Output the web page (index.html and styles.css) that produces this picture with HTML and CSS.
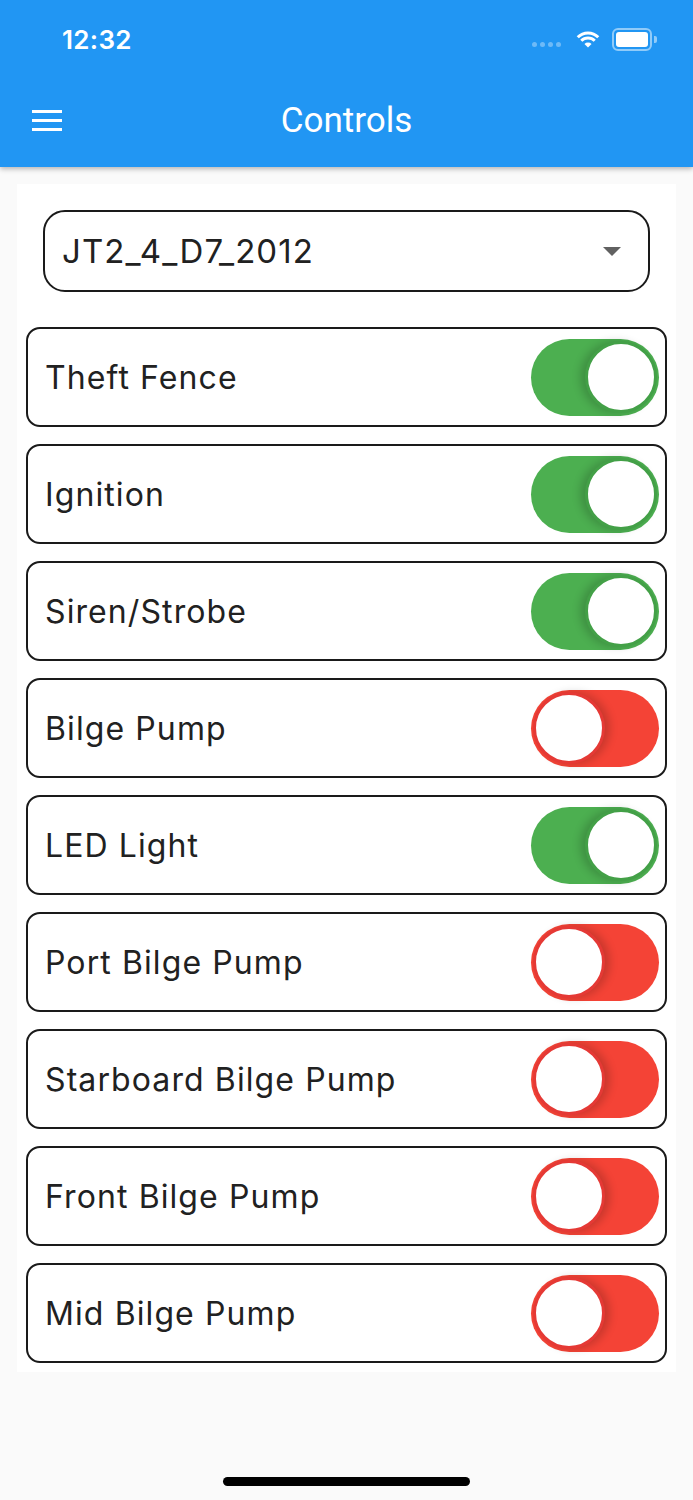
FILE: index.html
```html
<!DOCTYPE html>
<html lang="en">
<head>
    <meta charset="UTF-8">
    <title>Controls</title>
    <link rel="stylesheet" href="styles.css">
</head>
<body>
    <div class="app-bar">
        <div class="status-bar">
            <span class="time">12:32</span>
            <div class="status-icons">
                <div class="signal">
                    <span></span><span></span><span></span><span></span>
                </div>
                <svg class="wifi" width="24" height="19" viewBox="0 0 24 19">
                    <path d="M12 17.5 L8.46 13.96 A5 5 0 0 1 15.54 13.96 Z" fill="#fff"/>
                    <path d="M5.28 10.78 A9.5 9.5 0 0 1 18.72 10.78" fill="none" stroke="#fff" stroke-width="3"/>
                    <path d="M1.75 7.25 A14.5 14.5 0 0 1 22.25 7.25" fill="none" stroke="#fff" stroke-width="3"/>
                </svg>
                <div class="battery">
                    <div class="battery-fill"></div>
                </div>
                <div class="battery-nub"></div>
            </div>
        </div>
        <div class="toolbar">
            <div class="menu-icon">
                <span></span><span></span><span></span>
            </div>
            <div class="title">Controls</div>
        </div>
    </div>

    <div class="card">
        <div class="dropdown">
            <span>JT2_4_D7_2012</span>
            <span class="arrow"></span>
        </div>

        <div class="row">
            <span class="label">Theft Fence</span>
            <div class="switch on"><div class="thumb"></div></div>
        </div>
        <div class="row">
            <span class="label">Ignition</span>
            <div class="switch on"><div class="thumb"></div></div>
        </div>
        <div class="row">
            <span class="label">Siren/Strobe</span>
            <div class="switch on"><div class="thumb"></div></div>
        </div>
        <div class="row">
            <span class="label">Bilge Pump</span>
            <div class="switch off"><div class="thumb"></div></div>
        </div>
        <div class="row">
            <span class="label">LED Light</span>
            <div class="switch on"><div class="thumb"></div></div>
        </div>
        <div class="row">
            <span class="label">Port Bilge Pump</span>
            <div class="switch off"><div class="thumb"></div></div>
        </div>
        <div class="row">
            <span class="label">Starboard Bilge Pump</span>
            <div class="switch off"><div class="thumb"></div></div>
        </div>
        <div class="row">
            <span class="label">Front Bilge Pump</span>
            <div class="switch off"><div class="thumb"></div></div>
        </div>
        <div class="row">
            <span class="label">Mid Bilge Pump</span>
            <div class="switch off"><div class="thumb"></div></div>
        </div>
    </div>

    <div class="home-indicator"></div>
</body>
</html>
```

FILE: styles.css
```css
body {
    margin: 0;
    width: 693px;
    min-height: 1500px;
    background-color: #fafafa;
    font-family: Inter, Roboto, sans-serif;
    color: #212121;
}
.app-bar {
    height: 167px;
    background-color: #2196f3;
    box-shadow: 0 2px 5px rgba(0,0,0,0.28);
    color: white;
    position: relative;
    z-index: 1;
}
.status-bar {
    height: 78px;
    display: flex;
    align-items: center;
    justify-content: space-between;
    padding: 0 36px 0 62px;
}
.time {
    font-size: 26px;
    font-weight: 600;
    letter-spacing: 0.3px;
}
.status-icons {
    display: flex;
    align-items: center;
}
.signal {
    display: flex;
    gap: 3px;
    margin-top: 10px;
    margin-right: 15px;
}
.signal span {
    width: 5px;
    height: 5px;
    border-radius: 50%;
    background-color: rgba(255,255,255,0.35);
}
.wifi {
    margin-right: 12px;
}
.battery {
    width: 32px;
    height: 15px;
    padding: 2px;
    border: 2px solid rgba(255,255,255,0.5);
    border-radius: 6px;
}
.battery-fill {
    height: 100%;
    background-color: white;
    border-radius: 3px;
}
.battery-nub {
    width: 3px;
    height: 7px;
    margin-left: 2px;
    background-color: rgba(255,255,255,0.5);
    border-radius: 0 2px 2px 0;
}
.toolbar {
    height: 89px;
    display: flex;
    align-items: center;
    padding: 0 32px;
}
.menu-icon {
    display: flex;
    flex-direction: column;
    gap: 6px;
    margin-top: -5px;
}
.menu-icon span {
    width: 30px;
    height: 3px;
    background-color: white;
}
.title {
    flex: 1;
    text-align: center;
    font-family: Roboto, sans-serif;
    font-size: 35px;
    margin-right: 30px;
    margin-top: -4px;
}
.card {
    margin: 17px 17px 0;
    padding: 26px 9px 9px;
    background-color: white;
    display: flex;
    flex-direction: column;
    gap: 17px;
}
.dropdown {
    height: 78px;
    margin: 0 17px 18px;
    padding: 0 27px 0 17px;
    border: 2px solid #1a1a1a;
    border-radius: 22px;
    display: flex;
    align-items: center;
    justify-content: space-between;
    font-size: 33px;
    letter-spacing: 1.1px;
}
.arrow {
    width: 0;
    height: 0;
    border-left: 9px solid transparent;
    border-right: 9px solid transparent;
    border-top: 9px solid #616161;
}
.row {
    height: 96px;
    padding: 0 6px 0 17px;
    border: 2px solid #1a1a1a;
    border-radius: 14px;
    display: flex;
    align-items: center;
    justify-content: space-between;
}
.label {
    font-size: 32px;
    letter-spacing: 1.1px;
}
.switch {
    width: 124px;
    height: 73px;
    padding: 2px;
    border-radius: 40px;
    display: flex;
    align-items: center;
}
.switch.on {
    background-color: #4caf50;
    justify-content: flex-end;
}
.switch.off {
    background-color: #f44336;
}
.thumb {
    width: 66px;
    height: 66px;
    border-radius: 50%;
    background-color: white;
}
.switch.on .thumb {
    border: 3px solid #43a047;
    box-shadow: -5px 0 8px rgba(0,0,0,0.18);
}
.switch.off .thumb {
    border: 3px solid #e53935;
    box-shadow: 5px 0 8px rgba(0,0,0,0.18);
}
.home-indicator {
    width: 247px;
    height: 9px;
    margin: 105px auto 0;
    background-color: black;
    border-radius: 5px;
}
```
